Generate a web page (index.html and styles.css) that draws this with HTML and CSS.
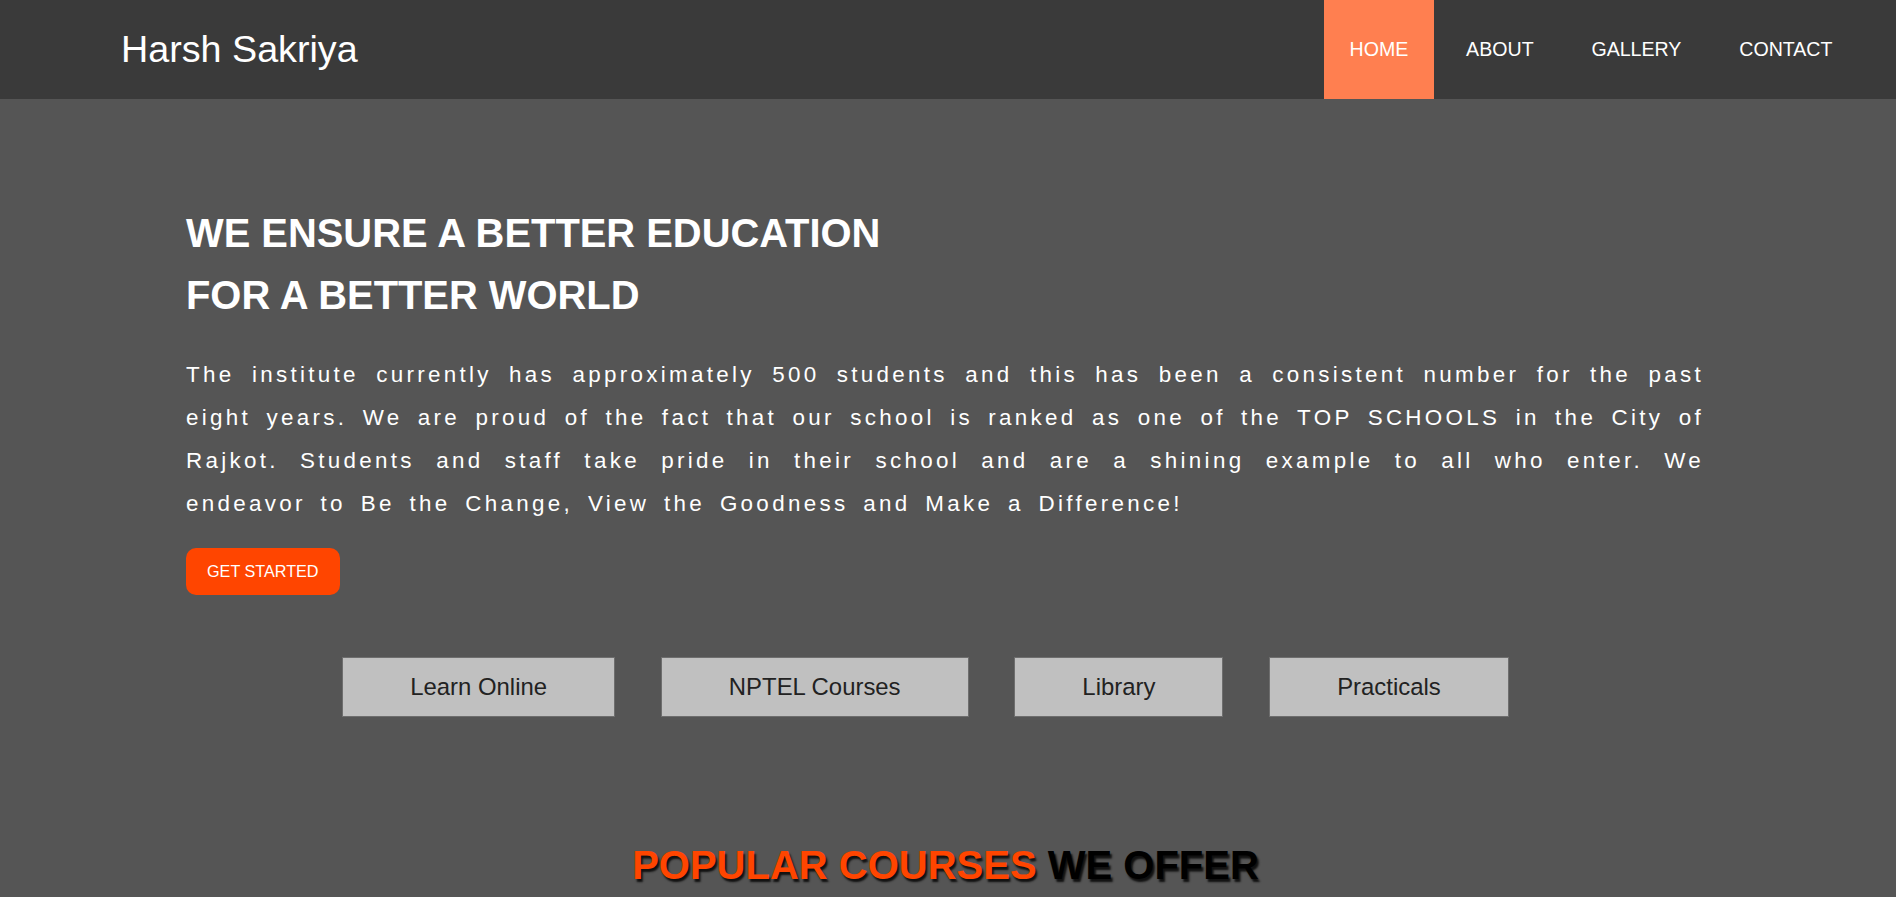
FILE: index.html
```html
<!DOCTYPE html>
<html lang="en">
<head>
<meta charset="utf-8">
<title>Harsh Sakriya</title>
<link rel="stylesheet" href="styles.css">
</head>
<body>
<header class="navbar">
  <div class="logo">Harsh Sakriya</div>
  <nav class="nav">
    <a class="nav-link active" href="#">HOME</a>
    <a class="nav-link" href="#">ABOUT</a>
    <a class="nav-link" href="#">GALLERY</a>
    <a class="nav-link" href="#">CONTACT</a>
  </nav>
</header>
<main class="main">
  <section class="hero">
    <h1 class="hero-title">WE ENSURE A BETTER EDUCATION<br>FOR A BETTER WORLD</h1>
    <p class="hero-text"><span class="line">The institute currently has approximately 500 students and this has been a consistent number for the past</span> <span class="line">eight years. We are proud of the fact that our school is ranked as one of the TOP SCHOOLS in the City of</span> <span class="line">Rajkot. Students and staff take pride in their school and are a shining example to all who enter. We</span> <span class="line last">endeavor to Be the Change, View the Goodness and Make a Difference!</span></p>
    <a class="cta" href="#">GET STARTED</a>
  </section>
  <div class="links">
    <a class="link-box" href="#">Learn Online</a>
    <a class="link-box" href="#">NPTEL Courses</a>
    <a class="link-box" href="#">Library</a>
    <a class="link-box" href="#">Practicals</a>
  </div>
  <h2 class="section-title"><span class="accent">POPULAR COURSES</span> WE OFFER</h2>
</main>
</body>
</html>
```
FILE: styles.css
```css
* { box-sizing: border-box; }
html, body { margin: 0; padding: 0; }
body {
  background: #555555;
  font-family: "Liberation Sans", Arial, sans-serif;
  color: #fff;
}
.navbar {
  height: 99px;
  background: #3a3a3a;
  display: flex;
  align-items: center;
  justify-content: space-between;
  padding: 0 38px 0 121px;
}
.logo {
  font-size: 37.7px;
  color: #fff;
}
.nav {
  display: flex;
  align-self: stretch;
  gap: 6.8px;
}
.nav-link {
  display: block;
  line-height: 99px;
  padding: 0 25.5px;
  font-size: 19.6px;
  color: #fff;
  text-decoration: none;
}
.nav-link.active { background: #ff7f50; }

.hero {
  width: 1518px;
  margin-left: 186px;
  padding-top: 103px;
}
.hero-title {
  margin: 0;
  font-size: 39.9px;
  line-height: 62.4px;
  font-weight: bold;
}
.hero-text {
  margin: 26px 0 0;
  font-size: 22.4px;
  line-height: 43px;
  letter-spacing: 3.3px;
  word-spacing: 5.3px;
  text-align: justify;
}
.line {
  display: block;
  text-align: justify;
  text-align-last: justify;
}
.line.last { text-align-last: left; }
.cta {
  display: inline-flex;
  align-items: center;
  height: 47.5px;
  margin-top: 23px;
  padding: 0 21px;
  background: #ff4500;
  color: #fff;
  border-radius: 10px;
  font-size: 16.2px;
  text-decoration: none;
}
.links {
  display: flex;
  justify-content: center;
  gap: 45.8px;
  padding-right: 45px;
  margin-top: 62px;
}
.link-box {
  display: flex;
  align-items: center;
  height: 60px;
  padding: 0 67px;
  background: #c0c0c0;
  border: 1px solid #6e6e6e;
  color: #222;
  font-size: 23.9px;
  text-decoration: none;
}
.section-title {
  margin: 125px 0 40px;
  padding-right: 5px;
  text-align: center;
  font-size: 40px;
  line-height: 46px;
  font-weight: bold;
  color: #000;
  text-shadow: 2px 3px 2px #111;
}
.accent { color: #ff4500; }
```
